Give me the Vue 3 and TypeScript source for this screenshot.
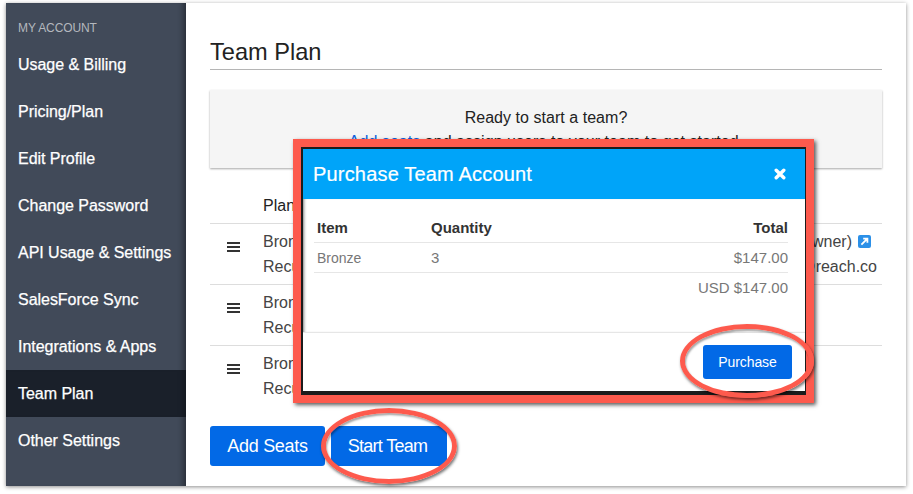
<script setup lang="ts">
const nav: string[] = ['Usage & Billing', 'Pricing/Plan', 'Edit Profile', 'Change Password', 'API Usage & Settings', 'SalesForce Sync', 'Integrations & Apps', 'Team Plan', 'Other Settings']
const rows = [
  { name: 'Bronze', rec: 'Recurring', who: 'Daniel Kim (owner)', mail: 'dan@reach.co', link: true },
  { name: 'Bronze', rec: 'Recurring', who: '', mail: '', link: false },
  { name: 'Bronze', rec: 'Recurring', who: '', mail: '', link: false },
]
</script>

<template>
  <div class="page">
    <div class="window">
      <aside class="side">
        <div class="side-title">MY ACCOUNT</div>
        <a v-for="n in nav" :key="n" class="nav-item" :class="{ active: n === 'Team Plan' }">{{ n }}</a>
      </aside>
      <main class="main">
        <h1 class="title">Team Plan</h1>
        <div class="well">
          <div>Ready to start a team?</div>
          <div><span class="link">Add seats</span> and assign users to your team to get started.</div>
        </div>
        <div class="thead"><span>Plan</span></div>
        <div v-for="(r, i) in rows" :key="i" class="row" :class="{ last: i === rows.length - 1 }">
          <div class="burger"><i></i><i></i><i></i></div>
          <div class="cell-name">
            <div>{{ r.name }}</div>
            <div>{{ r.rec }}</div>
          </div>
          <div class="cell-who">
            <div class="who">{{ r.who }}<svg v-if="r.link" class="ext" viewBox="0 0 13 13"><rect width="13" height="13" rx="2" fill="#2b90e8"/><path d="M3.4 9.6 8.6 4.4M5.2 3.6h4.2v4.2" fill="none" stroke="#fff" stroke-width="1.8"/></svg></div>
            <div class="mail">{{ r.mail }}</div>
          </div>
        </div>
        <div class="actions">
          <button class="btn">Add Seats</button>
          <button class="btn start">Start Team</button>
        </div>
      </main>
    </div>

    <div class="frame">
      <div class="modal">
        <header class="m-head">
          <span>Purchase Team Account</span>
          <svg class="close" viewBox="0 0 12 12"><path d="M2.2 2.2 9.8 9.8M9.8 2.2 2.2 9.8" stroke="#fff" stroke-width="3.4" stroke-linecap="round" fill="none"/></svg>
        </header>
        <div class="m-body">
          <div class="m-row m-th"><span class="c1">Item</span><span class="c2">Quantity</span><span class="c3">Total</span></div>
          <div class="m-row m-td"><span class="c1">Bronze</span><span class="c2">3</span><span class="c3">$147.00</span></div>
          <div class="m-row m-total"><span class="c3">USD $147.00</span></div>
        </div>
        <footer class="m-foot"><button class="btn small">Purchase</button></footer>
      </div>
    </div>
    <div class="ring ring-purchase"></div>
    <div class="ring ring-start"></div>
  </div>
</template>

<style>
html, body { margin: 0; background: #fff; }
</style>

<style scoped>
.page { position: relative; width: 913px; height: 494px; padding: 3px 7px 8px 6px; box-sizing: border-box; overflow: hidden; font-family: "Liberation Sans", Arial, sans-serif; color: #333; }
.window { display: flex; height: 483px; background: #fff; box-shadow: 0 1px 4px rgba(0,0,0,.45); }
.side { width: 180px; flex: none; background: #414a59; box-shadow: inset -7px 0 6px -5px rgba(0,0,0,.45); padding-top: 18px; box-sizing: border-box; }
.side-title { font-size: 12px; line-height: 14px; color: #b4b8be; padding-left: 12px; margin-bottom: 6px; letter-spacing: -.1px; }
.nav-item { display: flex; align-items: center; height: 47px; padding-left: 12px; color: #fff; font-size: 16px; letter-spacing: -.03px; -webkit-text-stroke: .25px #fff; }
.nav-item.active { background: #1a202a; box-shadow: inset -7px 0 6px -5px rgba(0,0,0,.3); }
.main { flex: 1; padding: 0 24px; min-width: 0; }
.title { margin: 35px 0 0; height: 31px; font-size: 23.6px; line-height: 28px; font-weight: 400; color: #222; border-bottom: 1px solid #b5b5b5; }
.well { margin-top: 20px; height: 78px; box-sizing: border-box; padding-top: 16px; background: #f5f5f5; box-shadow: 0 1px 2px rgba(0,0,0,.35); text-align: center; font-size: 16px; line-height: 24px; letter-spacing: .04px; color: #222; }
.link { color: #0a5fe0; }
.thead { margin-top: 25px; height: 31px; padding-left: 53px; padding-top: 1px; box-sizing: border-box; font-size: 16px; line-height: 24px; color: #222; border-bottom: 1px solid #ddd; }
.row { display: flex; height: 61px; box-sizing: border-box; border-bottom: 1px solid #ddd; font-size: 16px; line-height: 25px; color: #444; padding-top: 5px; }
.row.last { border-bottom-color: transparent; }
.burger { width: 13px; margin: 13px 23px 0 17px; display: flex; flex-direction: column; gap: 2px; }
.burger i { display: block; height: 2px; background: #333; }
.cell-name { width: 120px; }
.cell-who { flex: 1; text-align: right; padding-right: 5px; }
.who { display: flex; justify-content: flex-end; align-items: center; gap: 6px; height: 25px; padding-right: 6px; }
.ext { width: 13px; height: 13px; }
.actions { display: flex; gap: 6px; margin-top: 19px; }
.btn { height: 40px; width: 115px; border: 0; border-radius: 3px; background: #0269e6; color: #fff; font: 18px "Liberation Sans", Arial, sans-serif; letter-spacing: -.3px; padding: 0; }
.btn.start { width: 116px; letter-spacing: -.7px; padding-right: 3px; }
.frame { position: absolute; left: 293px; top: 139px; width: 521px; height: 264px; box-sizing: border-box; border: 8px solid #fd5a4d; box-shadow: 2px 2px 4px rgba(0,0,0,.65); background: #1c1c1c; }
.modal { margin: 2px 1px 4px 2px; height: 242px; background: #fff; display: flex; flex-direction: column; }
.m-head { height: 50px; flex: none; background: #00a4f9; color: #fff; font-size: 20px; display: flex; align-items: center; justify-content: space-between; padding: 0 19px 0 10px; letter-spacing: .18px; -webkit-text-stroke: .2px #fff; }
.close { width: 12px; height: 12px; }
.m-body { padding: 18px 17px 0 11px; flex: 1; box-shadow: inset 3px 0 3px -2px rgba(0,0,0,.5); }
.m-row { display: flex; font-size: 15px; box-sizing: border-box; }
.c1 { width: 114px; padding-left: 3px; }
.c2 { flex: 1; }
.c3 { margin-left: auto; }
.m-th { height: 26px; font-weight: 700; border-bottom: 1px solid #e6e6e6; color: #333; line-height: 21px; }
.m-td { height: 30px; color: #777; border-bottom: 1px solid #e6e6e6; line-height: 30px; }
.m-td .c1 { font-size: 14px; }
.m-total { height: 30px; color: #777; line-height: 30px; }
.m-foot { height: 59px; flex: none; border-top: 1px solid #e6e6e6; display: flex; justify-content: flex-end; padding: 12px 13px 0 0; box-sizing: border-box; }
.btn.small { width: 89px; height: 34px; font-size: 14px; letter-spacing: -.1px; }
.ring { position: absolute; box-sizing: border-box; border: 5px solid #fd5a4d; border-radius: 50%; box-shadow: 1px 2px 3px rgba(0,0,0,.55), inset 1px 2px 2px rgba(0,0,0,.35); }
.ring-purchase { left: 680px; top: 324px; width: 134px; height: 74px; }
.ring-start { left: 321px; top: 408px; width: 136px; height: 76px; }
</style>
